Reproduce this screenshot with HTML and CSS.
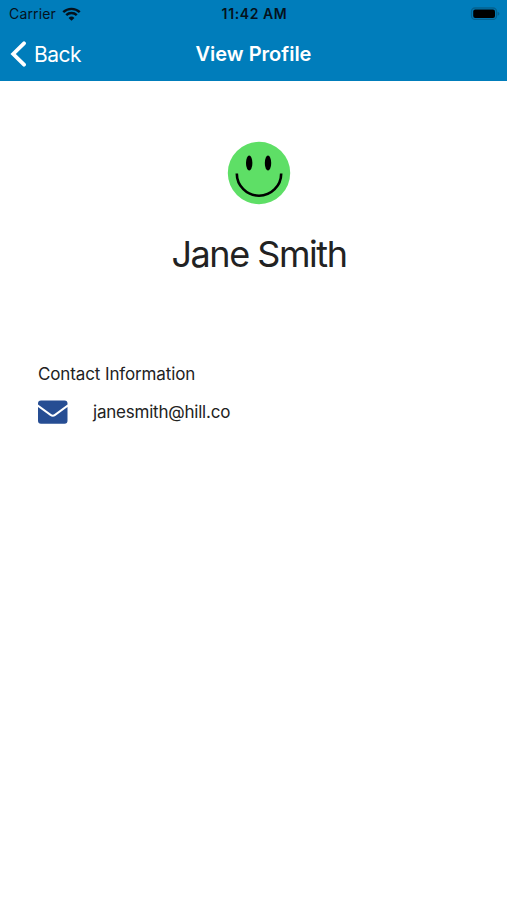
FILE: index.html
```
<!DOCTYPE html>
<html lang="en">
<head>
	<meta charset="UTF-8">
	<title>View Profile</title>
	<link rel="stylesheet" href="styles.css">
</head>
<body>

	<header class="header">
		<div class="status-bar">
			<div class="carrier">
				<span>Carrier</span>
				<svg class="wifi" viewBox="0 0 18 13" width="19" height="14">
					<path d="M1.2 4.8a11.2 11.2 0 0 1 15.6 0M4 7.6a7.2 7.2 0 0 1 10 0" fill="none" stroke="#05121c" stroke-width="2.3"/>
					<path d="M9 13L6.2 10.2a4 4 0 0 1 5.6 0z" fill="#05121c"/>
				</svg>
			</div>
			<span class="time">11:42 AM</span>
			<svg class="battery" viewBox="0 0 30 14" width="30" height="14">
				<rect x="1.5" y="1" width="25" height="11.4" rx="3.5" fill="none" stroke="#04618f" stroke-width="1.3"/>
				<rect x="3.2" y="2.5" width="21.8" height="8.4" rx="2" fill="#000"/>
				<path d="M27.6 4.8v4q1.8-.6 1.8-2t-1.8-2z" fill="#04618f"/>
			</svg>
		</div>
		<nav class="nav-bar">
			<a class="back" href="#">
				<svg viewBox="0 0 16 26" width="16" height="26">
					<path d="M14 2.3L3.2 13 14 23.7" fill="none" stroke="#fff" stroke-width="3.8" stroke-linecap="round"/>
				</svg>
				<span>Back</span>
			</a>
			<h1 class="title">View Profile</h1>
		</nav>
	</header>

	<main class="profile">
		<svg class="avatar" viewBox="0 0 64 64" width="64" height="64">
			<circle cx="32" cy="32" r="31.2" fill="#5edf66"/>
			<ellipse cx="22.2" cy="22" rx="3.2" ry="7.5"/>
			<ellipse cx="41" cy="22" rx="3.2" ry="7.5"/>
			<path d="M9.8 32.5a22.2 22.2 0 0 0 44.4 0" fill="none" stroke="#000" stroke-width="2.6"/>
		</svg>
		<h2 class="name">Jane Smith</h2>

		<section class="contact">
			<h3>Contact Information</h3>
			<div class="contact-row">
				<svg viewBox="0 0 30 24" width="30" height="24">
					<path d="M3 .5h23.5q3 0 3 3v1L16.5 14q-1.7 1.3-3.4 0L0 4.5v-1q0-3 3-3z" fill="#264d93"/>
					<path d="M0 7l12 8.8q2.8 2 5.6 0L29.5 7v13.8q0 3-3 3H3q-3 0-3-3z" fill="#264d93"/>
				</svg>
				<span class="email">janesmith@hill.co</span>
			</div>
		</section>
	</main>

</body>
</html>
```
FILE: styles.css
```
* {
	margin: 0;
	padding: 0;
	box-sizing: border-box;
}
body {
	background: #fff;
	color: #222;
	font-family: Inter, "Liberation Sans", sans-serif;
}
svg {
	display: block;
}
.header {
	height: 81px;
	background: #007dbb;
}
.status-bar {
	display: grid;
	grid-template-columns: 1fr auto 1fr;
	align-items: center;
	height: 27px;
	padding: 0 7px 0 9px;
	color: #05121c;
	font-size: 14px;
}
.carrier {
	display: flex;
	align-items: center;
	gap: 6px;
	letter-spacing: .15px;
}
.time {
	font-weight: 600;
	letter-spacing: .6px;
}
.battery {
	justify-self: end;
}
.nav-bar {
	display: grid;
	grid-template-columns: 1fr auto 1fr;
	align-items: center;
	height: 54px;
	padding: 0 10px;
	color: #fff;
}
.back {
	display: flex;
	align-items: center;
	gap: 8px;
	color: #fff;
	font-size: 21px;
	letter-spacing: -.5px;
	text-decoration: none;
}
.title {
	font-size: 20px;
	font-weight: 600;
}
.profile {
	padding: 60px 38px 0;
}
.avatar {
	margin: 0 auto;
	position: relative;
	left: 5px;
}
.name {
	margin-top: 27px;
	padding-left: 11px;
	font-size: 36px;
	font-weight: 400;
	line-height: 44px;
	letter-spacing: -1.45px;
	text-align: center;
}
.contact {
	margin-top: 87px;
}
.contact h3 {
	font-size: 17px;
	font-weight: 400;
	line-height: 22px;
	letter-spacing: -.12px;
}
.contact-row {
	display: flex;
	align-items: center;
	gap: 25px;
	margin-top: 15px;
}
.email {
	font-size: 17px;
	line-height: 22px;
	letter-spacing: -.22px;
}
```
